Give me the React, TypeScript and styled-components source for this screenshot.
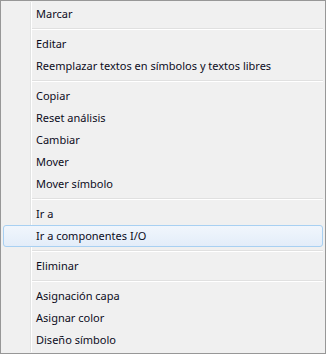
import React from "react";
import styled, { createGlobalStyle } from "styled-components";

const Global = createGlobalStyle`
  html, body { margin: 0; padding: 0; background: #ffffff; }
  body { font-family: "Noto Sans", "Open Sans", sans-serif; }
`;

const Menu = styled.div`
  box-sizing: border-box;
  width: 326px;
  height: 354px;
  border: 1px solid #979797;
  background: #f0f0f0;
  padding: 2px;
  position: relative;
  display: flex;
  flex-direction: column;
`;

const Gutter = styled.div`
  position: absolute;
  top: 1px;
  bottom: 1px;
  left: 29px;
  width: 1px;
  background: #e2e3e3;
  border-right: 1px solid #ffffff;
`;

const Item = styled.div<{ $hover?: boolean }>`
  position: relative;
  box-sizing: border-box;
  height: 22px;
  display: flex;
  align-items: center;
  padding-left: 32px;
  padding-bottom: 1px;
  font-size: 11px;
  color: #0c0c1c;
  border: 1px solid ${(p) => (p.$hover ? "#a8d0f2" : "transparent")};
  border-radius: 3px;
  background: ${(p) =>
    p.$hover ? "linear-gradient(#f1f6fc, #e3edf9)" : "transparent"};
  z-index: 1;
`;

const Separator = styled.div`
  height: 8px;
  display: flex;
  align-items: center;
  padding-left: 28px;
  &::after {
    content: "";
    flex: 1;
    height: 1px;
    background: #e0e0e0;
    border-bottom: 1px solid #ffffff;
  }
`;

type Entry = { label: string; hover?: boolean } | "sep";

const entries: Entry[] = [
  { label: "Marcar" },
  "sep",
  { label: "Editar" },
  { label: "Reemplazar textos en símbolos y textos libres" },
  "sep",
  { label: "Copiar" },
  { label: "Reset análisis" },
  { label: "Cambiar" },
  { label: "Mover" },
  { label: "Mover símbolo" },
  "sep",
  { label: "Ir a" },
  { label: "Ir a componentes I/O", hover: true },
  "sep",
  { label: "Eliminar" },
  "sep",
  { label: "Asignación capa" },
  { label: "Asignar color" },
  { label: "Diseño símbolo" },
];

export default function App() {
  return (
    <>
      <Global />
      <Menu>
        <Gutter />
        {entries.map((e, i) =>
          e === "sep" ? (
            <Separator key={i} />
          ) : (
            <Item key={i} $hover={e.hover}>
              {e.label}
            </Item>
          )
        )}
      </Menu>
    </>
  );
}
